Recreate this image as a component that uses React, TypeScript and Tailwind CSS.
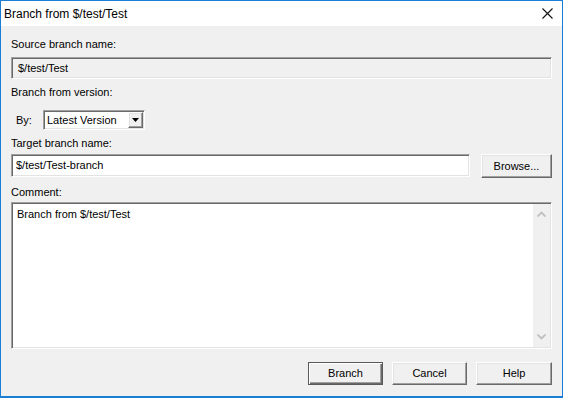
const sunken =
  "border border-t-[#a0a0a0] border-l-[#a0a0a0] border-b-white border-r-white shadow-[inset_1px_1px_0_#696969,inset_-1px_-1px_0_#e3e3e3]";
const raised =
  "border border-t-white border-l-white border-b-[#696969] border-r-[#696969] shadow-[inset_-1px_-1px_0_#a0a0a0,inset_1px_1px_0_#e3e3e3] bg-[#f0f0f0]";

const Label = ({ children, className = "" }: { children: string; className?: string }) => (
  <div className={`h-[13px] leading-[13px] text-[11px] text-black ${className}`}>{children}</div>
);

const Chevron = ({ down }: { down?: boolean }) => (
  <svg width="9" height="6" viewBox="0 0 9 6" className="block">
    <path
      d={down ? "M0.5 0.5 L4.5 4.5 L8.5 0.5" : "M0.5 5.5 L4.5 1.5 L8.5 5.5"}
      fill="none"
      stroke="#bfbfbf"
      strokeWidth="1.8"
    />
  </svg>
);

const App = () => {
  return (
    <div
      className="w-[563px] h-[398px] flex flex-col border border-b-2 border-[#1a7fd4] bg-[#f0f0f0] overflow-hidden"
      style={{ fontFamily: '"Liberation Sans", Arial, sans-serif' }}
    >
      {/* Title bar */}
      <div className="h-[25px] shrink-0 bg-white flex items-center justify-between pl-[3px] pr-[9px]">
        <span className="text-[12px] text-black">Branch from $/test/Test</span>
        <svg width="11" height="11" viewBox="0 0 11 11">
          <path d="M0.5 0.5 L10.5 10.5 M10.5 0.5 L0.5 10.5" stroke="#111" strokeWidth="1.1" />
        </svg>
      </div>

      {/* Body */}
      <div className="flex-1 flex flex-col px-[10px]">
        <Label className="mt-[12px]">Source branch name:</Label>
        <div className={`mt-[6px] h-[22px] flex items-center pl-[6px] text-[11px] bg-[#f0f0f0] ${sunken}`}>
          $/test/Test
        </div>

        <Label className="mt-[7px]">Branch from version:</Label>
        <div className="mt-[11px] h-[20px] flex items-center">
          <span className="ml-[5px] w-[27px] text-[11px]">By:</span>
          <div className={`w-[102px] h-[20px] bg-white flex items-center justify-between pl-[3px] pr-[1px] ${sunken}`}>
            <span className="text-[11px]">Latest Version</span>
            <div className={`w-[15px] h-[16px] flex items-center justify-center ${raised}`}>
              <svg width="7" height="4" viewBox="0 0 7 4">
                <path d="M0 0 H7 L3.5 4 Z" fill="#000" />
              </svg>
            </div>
          </div>
        </div>

        <Label className="mt-[7px]">Target branch name:</Label>
        <div className="mt-[4px] h-[23px] flex items-start gap-[11px]">
          <div className={`w-[459px] shrink-0 h-[23px] bg-white flex items-center pl-[4px] text-[11px] ${sunken}`}>
            $/test/Test-branch
          </div>
          <button className={`w-[71px] shrink-0 h-[24px] text-[11px] text-black ${raised}`}>Browse...</button>
        </div>

        <Label className="mt-[9px]">Comment:</Label>
        <div className={`mt-[3px] h-[147px] bg-white flex ${sunken}`}>
          <div className="flex-1 pl-[5px] pt-[5px] text-[11px] leading-[13px]">Branch from $/test/Test</div>
          <div className="w-[17px] mr-[1px] my-[1px] flex flex-col items-center justify-between py-[7px] bg-[#f0f0f0]">
            <Chevron />
            <Chevron down />
          </div>
        </div>

        <div className="mt-[13px] flex justify-end gap-[9px]">
          <button className="w-[75px] h-[23px] text-[11px] text-black bg-[#f0f0f0] border border-[#5a5a5a] shadow-[inset_1px_1px_0_#ffffff,inset_-1px_-1px_0_#696969,inset_-2px_-2px_0_#a0a0a0]">
            Branch
          </button>
          <button className={`w-[75px] h-[23px] text-[11px] text-black ${raised}`}>Cancel</button>
          <button className={`w-[76px] h-[23px] text-[11px] text-black ${raised}`}>Help</button>
        </div>
      </div>
    </div>
  );
};

export default App;
